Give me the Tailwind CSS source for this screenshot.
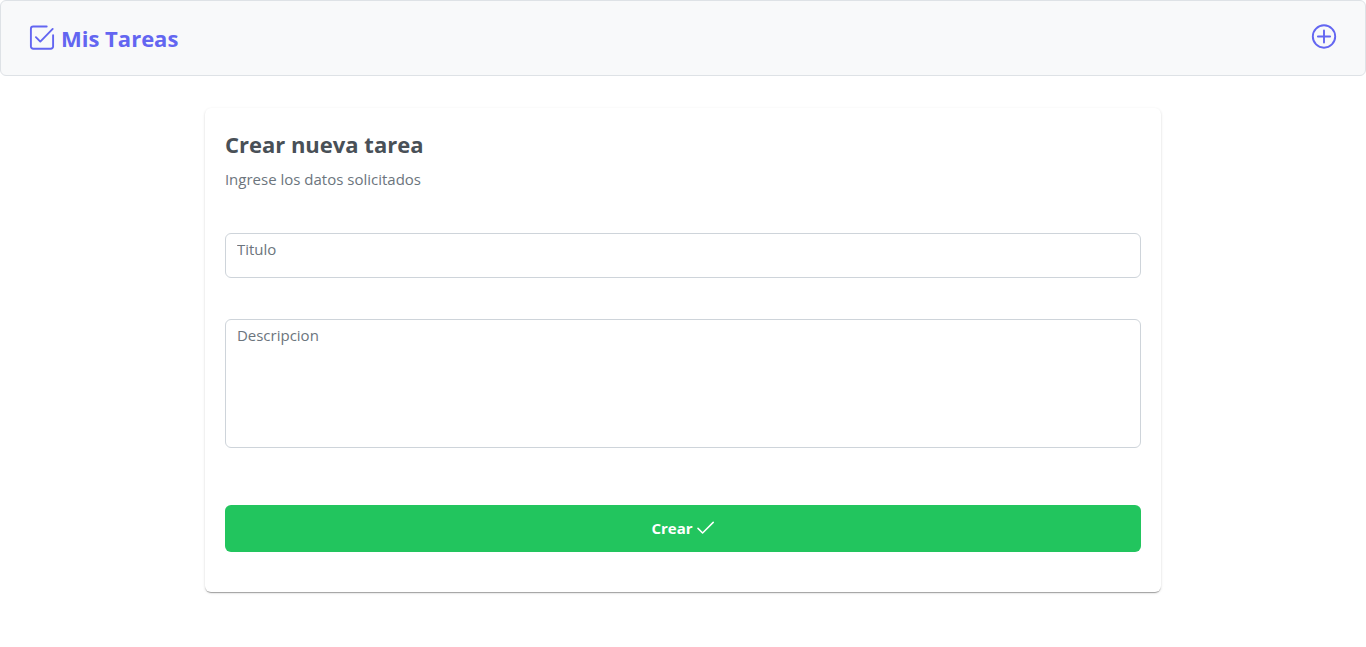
<!DOCTYPE html>
<html lang="es">
<head>
<meta charset="utf-8">
<meta name="viewport" content="width=device-width, initial-scale=1">
<title>Mis Tareas</title>
<script src="https://cdn.jsdelivr.net/npm/@tailwindcss/browser@4"></script>
</head>
<body class="min-h-screen bg-white font-['Segoe_UI','Open_Sans',sans-serif] text-[15px] text-[#495057]">
<header class="flex h-19 items-center justify-between rounded-md border border-[#dee2e6] bg-[#f8f9fa] px-7 text-[#6366f1]">
  <a href="#" class="flex items-center gap-1.5">
    <svg class="size-[26px]" viewBox="0 0 26 26" fill="none" stroke="currentColor" stroke-width="1.9" stroke-linecap="round" stroke-linejoin="round" aria-hidden="true"><path d="M17.7 1.5H4.2a2.3 2.3 0 0 0-2.3 2.3v17.6a2.3 2.3 0 0 0 2.3 2.3h17.6a2.3 2.3 0 0 0 2.3-2.3V10.2"/><path d="M6.9 12.2 11.3 16.6 23.7 3.9"/></svg>
    <span class="text-[22px] leading-8 font-bold">Mis Tareas</span>
  </a>
  <button type="button" aria-label="Nueva tarea" class="mb-1">
    <svg class="size-[26px]" viewBox="0 0 26 26" fill="none" stroke="currentColor" stroke-width="1.9" stroke-linecap="round" aria-hidden="true"><circle cx="13" cy="13.5" r="11.2"/><path d="M13 7.4v12.2M6.9 13.5h12.2"/></svg>
  </button>
</header>
<main class="mx-auto mt-8 w-7/10 rounded-md bg-white p-5 pb-10 shadow-[0_2px_1px_-1px_rgba(0,0,0,0.2),0_1px_1px_0_rgba(0,0,0,0.14),0_1px_3px_0_rgba(0,0,0,0.12)]">
  <h1 class="text-[22px] leading-8 font-bold">Crear nueva tarea</h1>
  <p class="mt-[7px] leading-6 text-[#6c757d]">Ingrese los datos solicitados</p>
  <form class="mt-[42px] flex flex-col">
    <input type="text" aria-label="Titulo" placeholder="Titulo" class="h-[45px] rounded-md border border-[#ced4da] px-[11px] pt-[3px] pb-4 leading-6 outline-none placeholder:text-[#6c757d]">
    <textarea aria-label="Descripcion" placeholder="Descripcion" class="mt-[41px] h-[129px] resize-none rounded-md border border-[#ced4da] px-[11px] py-[3px] leading-6 outline-none placeholder:text-[#6c757d]"></textarea>
    <button type="submit" class="mt-[57px] flex h-[47px] items-center justify-center gap-1 rounded-md bg-[#22c55e] font-bold text-white">
      <span>Crear</span>
      <svg class="mb-0.5 size-[18px]" viewBox="0 0 18 18" fill="none" stroke="currentColor" stroke-width="1.5" stroke-linecap="round" stroke-linejoin="round" aria-hidden="true"><path d="M1 9.4 5.6 14 16.2 3.4"/></svg>
    </button>
  </form>
</main>
</body>
</html>
